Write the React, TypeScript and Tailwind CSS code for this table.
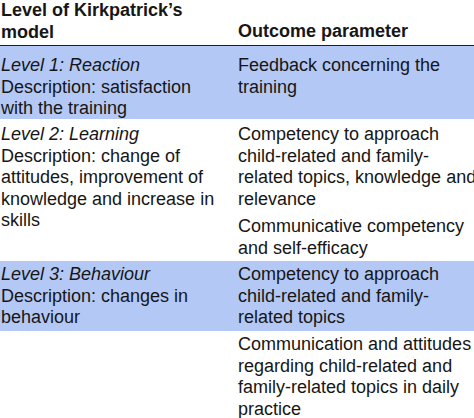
import React from "react";

const Lines = ({ lines }: { lines: React.ReactNode[] }) => (
  <>
    {lines.map((l, i) => (
      <div key={i} className="whitespace-nowrap">
        {l}
      </div>
    ))}
  </>
);

export default function App() {
  return (
    <div
      className="w-[474px] h-[418px] overflow-hidden bg-white text-[#161616] text-[18px] leading-[21.6px]"
      style={{ fontFamily: '"Liberation Sans", Arial, Helvetica, sans-serif' }}
    >
      {/* Header */}
      <div className="grid grid-cols-[237px_237px] h-[46px] border-b-[1.5px] border-[#1e1e1e] font-bold">
        <div className="pl-[1px]">
          <Lines lines={["Level of Kirkpatrick’s", "model"]} />
        </div>
        <div className="pl-[1px] flex flex-col justify-end pb-[2px]">
          <div className="whitespace-nowrap">Outcome parameter</div>
        </div>
      </div>

      {/* Row 1 */}
      <div className="grid grid-cols-[237px_237px] h-[73px] bg-[#b4c8f5] overflow-hidden">
        <div className="pl-[1px] pt-[9px]">
          <Lines
            lines={[
              <i>Level 1: Reaction</i>,
              "Description: satisfaction",
              "with the training",
            ]}
          />
        </div>
        <div className="pl-[1px] pt-[9px]">
          <Lines lines={["Feedback concerning the", "training"]} />
        </div>
      </div>

      {/* Row 2 */}
      <div className="grid grid-cols-[237px_237px] h-[142px]">
        <div className="pl-[1px] pt-[5px]">
          <Lines
            lines={[
              <i>Level 2: Learning</i>,
              "Description: change of",
              "attitudes, improvement of",
              "knowledge and increase in",
              "skills",
            ]}
          />
        </div>
        <div className="flex flex-col">
          <div className="pl-[1px] pt-[5px] h-[92px]">
            <Lines
              lines={[
                "Competency to approach",
                "child-related and family-",
                "related topics, knowledge and",
                "relevance",
              ]}
            />
          </div>
          <div className="pl-[1px] pt-[5px]">
            <Lines lines={["Communicative competency", "and self-efficacy"]} />
          </div>
        </div>
      </div>

      {/* Row 3 */}
      <div className="grid grid-cols-[237px_237px] h-[70px] bg-[#b4c8f5] overflow-hidden">
        <div className="pl-[1px] pt-[3px]">
          <Lines
            lines={[
              <i>Level 3: Behaviour</i>,
              "Description: changes in",
              "behaviour",
            ]}
          />
        </div>
        <div className="pl-[1px] pt-[3px]">
          <Lines
            lines={[
              "Competency to approach",
              "child-related and family-",
              "related topics",
            ]}
          />
        </div>
      </div>

      {/* Row 4 */}
      <div className="grid grid-cols-[237px_237px]">
        <div />
        <div className="pl-[1px] pt-[3px]">
          <Lines
            lines={[
              "Communication and attitudes",
              "regarding child-related and",
              "family-related topics in daily",
              "practice",
            ]}
          />
        </div>
      </div>
    </div>
  );
}
